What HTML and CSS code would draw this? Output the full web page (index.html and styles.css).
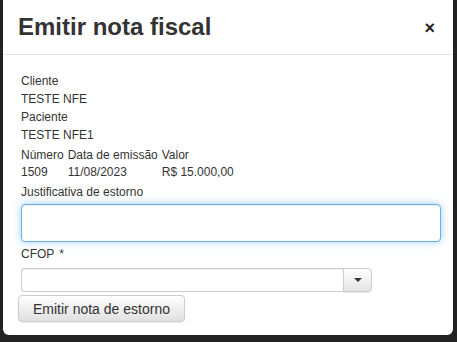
FILE: index.html
```html
<!DOCTYPE html>
<html lang="pt-BR">
<head>
<meta charset="utf-8">
<title>Emitir nota fiscal</title>
<link rel="stylesheet" href="styles.css">
</head>
<body>
<div class="modal">
  <div class="modal-header">
    <h4 class="modal-title">Emitir nota fiscal</h4>
    <button class="close" type="button">×</button>
  </div>
  <div class="modal-body">
    <div class="lines">
      <div>Cliente</div>
      <div>TESTE NFE</div>
      <div>Paciente</div>
      <div>TESTE NFE1</div>
    </div>
    <div class="grid">
      <div>Número</div><div>Data de emissão</div><div>Valor</div>
      <div>1509</div><div>11/08/2023</div><div>R$ 15.000,00</div>
    </div>
    <label class="label just">Justificativa de estorno</label>
    <input class="input" type="text">
    <label class="label cfop">CFOP<span class="req">*</span></label>
    <div class="combo">
      <div class="combo-text"></div>
      <div class="combo-btn"><span class="caret"></span></div>
    </div>
    <button class="btn" type="button">Emitir nota de estorno</button>
  </div>
</div>
</body>
</html>
```
FILE: styles.css
```css
html, body {
  margin: 0;
  padding: 0;
  background: #232323;
  height: 342px;
  overflow: hidden;
}
body {
  font-family: "Liberation Sans", Arial, sans-serif;
  font-size: 12px;
  color: #333;
}
.modal {
  margin: -10px 0 0 3px;
  width: 450px;
  background: #fff;
  border-radius: 6px;
}
.modal-header {
  display: flex;
  align-items: center;
  justify-content: space-between;
  padding: 24px 18px 14px 15px;
  border-bottom: 1px solid #e5e5e5;
}
.modal-title {
  margin: 0;
  font-size: 24px;
  line-height: 26px;
  font-weight: bold;
  color: #333;
}
.close {
  border: 0;
  background: none;
  padding: 2px 0 0 0;
  font-family: "Liberation Sans", Arial, sans-serif;
  font-size: 18px;
  font-weight: bold;
  line-height: 18px;
  color: #222;
}
.modal-body {
  padding: 17px 12px 13px 15px;
  display: flex;
  flex-direction: column;
  align-items: flex-start;
}
.lines {
  margin-left: 3px;
  line-height: 18px;
}
.grid {
  margin: 3px 0 0 3px;
  display: grid;
  grid-template-columns: auto auto auto;
  column-gap: 4px;
  line-height: 17px;
}
.label {
  display: block;
  margin-left: 3px;
  line-height: 17px;
}
.req { margin-left: 5px; }
.just { margin-top: 3px; }
.cfop { margin-top: 4px; }
.input {
  margin: 3px 0 0 3px;
  width: 420px;
  height: 38px;
  box-sizing: border-box;
  border: 1px solid #66afe9;
  border-radius: 4px;
  box-shadow: inset 0 1px 1px rgba(0,0,0,.075), 0 0 8px rgba(102,175,233,.6);
  outline: none;
  padding: 6px 12px;
}
.combo {
  margin: 5px 0 0 3px;
  display: flex;
  height: 24px;
  width: 351px;
}
.combo-text {
  flex: 1;
  border: 1px solid #ccc;
  border-right: 0;
  border-radius: 4px 0 0 4px;
  box-shadow: inset 0 1px 1px rgba(0,0,0,.075);
}
.combo-btn {
  width: 29px;
  box-sizing: border-box;
  border: 1px solid #ccc;
  border-radius: 0 4px 4px 0;
  background: linear-gradient(to bottom, #fff 0, #e4e4e4 100%);
  display: flex;
  align-items: center;
  justify-content: center;
  box-shadow: 0 1px 1px rgba(0,0,0,.075);
}
.caret {
  width: 0;
  height: 0;
  border-left: 4px solid transparent;
  border-right: 4px solid transparent;
  border-top: 4px solid #333;
}
.btn {
  margin-top: 3px;
  height: 27px;
  padding: 0 14px;
  font-family: "Liberation Sans", Arial, sans-serif;
  font-size: 14px;
  color: #333;
  border: 1px solid #ccc;
  border-radius: 4px;
  background: linear-gradient(to bottom, #fff 0, #e0e0e0 100%);
  box-shadow: inset 0 1px 0 rgba(255,255,255,.15), 0 1px 1px rgba(0,0,0,.075);
}
```
